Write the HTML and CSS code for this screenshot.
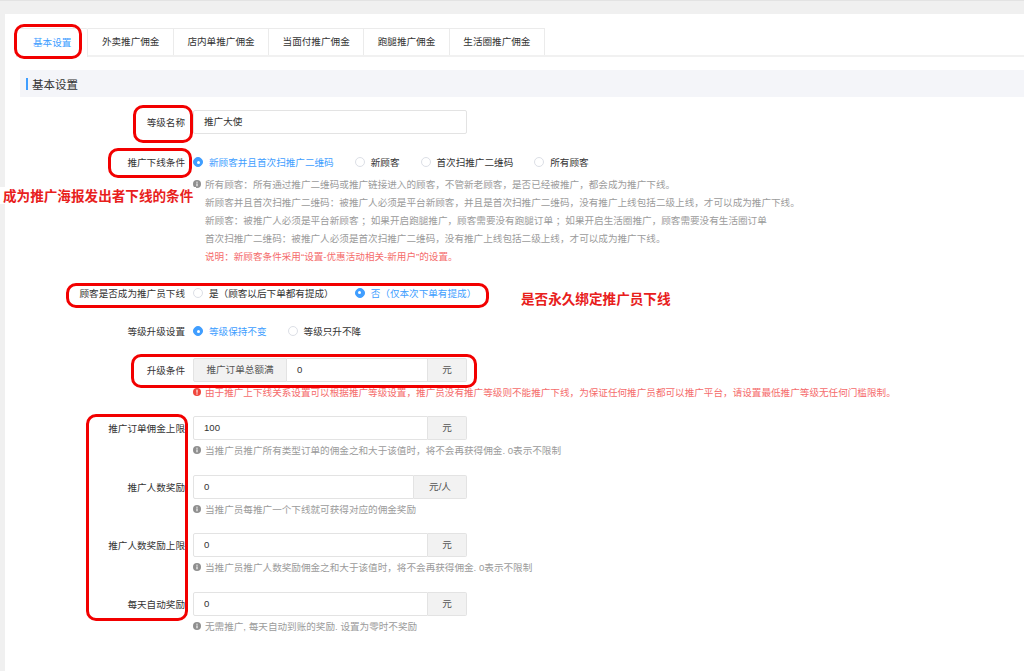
FILE: index.html
```html
<!DOCTYPE html>
<html lang="zh-CN">
<head>
<meta charset="utf-8">
<title>推广等级设置</title>
<link rel="stylesheet" href="styles.css">
</head>
<body>
<div class="page">
  <div class="panel">
    <div class="tabs">
      <div class="tab active">基本设置</div>
      <div class="tab">外卖推广佣金</div>
      <div class="tab">店内单推广佣金</div>
      <div class="tab">当面付推广佣金</div>
      <div class="tab">跑腿推广佣金</div>
      <div class="tab">生活圈推广佣金</div>
    </div>
    <div class="sec-title"><span class="bar"></span>基本设置</div>

    <div class="form">
      <div class="group first">
        <div class="row">
          <label class="lbl">等级名称</label>
          <div class="input">推广大使</div>
        </div>
      </div>

      <div class="group">
        <div class="row">
          <label class="lbl">推广下线条件</label>
          <div class="radios">
            <span class="radio on"><i class="dot"></i>新顾客并且首次扫推广二维码</span>
            <span class="radio"><i class="dot"></i>新顾客</span>
            <span class="radio"><i class="dot"></i>首次扫推广二维码</span>
            <span class="radio"><i class="dot"></i>所有顾客</span>
          </div>
        </div>
        <div class="help">
          <span class="ico"><svg viewBox="0 0 8 8" width="8" height="8"><circle cx="4" cy="4" r="4" fill="#8f8f8f"/><rect x="3.45" y="3.4" width="1.1" height="2.9" fill="#fff"/><circle cx="4" cy="2.2" r="0.65" fill="#fff"/></svg></span>
          <div class="lines">
            <p>所有顾客：所有通过推广二维码或推广链接进入的顾客，不管新老顾客，是否已经被推广，都会成为推广下线。</p>
            <p>新顾客并且首次扫推广二维码：被推广人必须是平台新顾客，并且是首次扫推广二维码，没有推广上线包括二级上线，才可以成为推广下线。</p>
            <p>新顾客：被推广人必须是平台新顾客 ；如果开启跑腿推广，顾客需要没有跑腿订单 ；如果开启生活圈推广，顾客需要没有生活圈订单</p>
            <p>首次扫推广二维码：被推广人必须是首次扫推广二维码，没有推广上线包括二级上线，才可以成为推广下线。</p>
            <p class="warn">说明：新顾客条件采用“设置-优惠活动相关-新用户”的设置。</p>
          </div>
        </div>
      </div>

      <div class="group">
        <div class="row">
          <label class="lbl">顾客是否成为推广员下线</label>
          <div class="radios">
            <span class="radio"><i class="dot"></i>是（顾客以后下单都有提成）</span>
            <span class="radio on"><i class="dot"></i>否（仅本次下单有提成）</span>
          </div>
        </div>
      </div>

      <div class="group">
        <div class="row">
          <label class="lbl">等级升级设置</label>
          <div class="radios">
            <span class="radio on"><i class="dot"></i>等级保持不变</span>
            <span class="radio"><i class="dot"></i>等级只升不降</span>
          </div>
        </div>
      </div>

      <div class="group">
        <div class="row">
          <label class="lbl">升级条件</label>
          <div class="igroup">
            <span class="addon pre">推广订单总额满</span>
            <span class="field mid">0</span>
            <span class="addon suf">元</span>
          </div>
        </div>
        <div class="help warn">
          <span class="ico"><svg viewBox="0 0 8 8" width="8" height="8"><circle cx="4" cy="4" r="4" fill="#f0463c"/><rect x="3.45" y="1.6" width="1.1" height="3.2" fill="#fff"/><circle cx="4" cy="6" r="0.65" fill="#fff"/></svg></span>
          <div class="lines">
            <p>由于推广上下线关系设置可以根据推广等级设置，推广员没有推广等级则不能推广下线，为保证任何推广员都可以推广平台，请设置最低推广等级无任何门槛限制。</p>
          </div>
        </div>
      </div>

      <div class="group">
        <div class="row">
          <label class="lbl">推广订单佣金上限</label>
          <div class="igroup">
            <span class="field">100</span>
            <span class="addon suf">元</span>
          </div>
        </div>
        <div class="help">
          <span class="ico"><svg viewBox="0 0 8 8" width="8" height="8"><circle cx="4" cy="4" r="4" fill="#8f8f8f"/><rect x="3.45" y="3.4" width="1.1" height="2.9" fill="#fff"/><circle cx="4" cy="2.2" r="0.65" fill="#fff"/></svg></span>
          <div class="lines"><p>当推广员推广所有类型订单的佣金之和大于该值时，将不会再获得佣金. 0表示不限制</p></div>
        </div>
      </div>

      <div class="group">
        <div class="row">
          <label class="lbl">推广人数奖励</label>
          <div class="igroup">
            <span class="field">0</span>
            <span class="addon suf wide">元/人</span>
          </div>
        </div>
        <div class="help">
          <span class="ico"><svg viewBox="0 0 8 8" width="8" height="8"><circle cx="4" cy="4" r="4" fill="#8f8f8f"/><rect x="3.45" y="3.4" width="1.1" height="2.9" fill="#fff"/><circle cx="4" cy="2.2" r="0.65" fill="#fff"/></svg></span>
          <div class="lines"><p>当推广员每推广一个下线就可获得对应的佣金奖励</p></div>
        </div>
      </div>

      <div class="group">
        <div class="row">
          <label class="lbl">推广人数奖励上限</label>
          <div class="igroup">
            <span class="field">0</span>
            <span class="addon suf">元</span>
          </div>
        </div>
        <div class="help">
          <span class="ico"><svg viewBox="0 0 8 8" width="8" height="8"><circle cx="4" cy="4" r="4" fill="#8f8f8f"/><rect x="3.45" y="3.4" width="1.1" height="2.9" fill="#fff"/><circle cx="4" cy="2.2" r="0.65" fill="#fff"/></svg></span>
          <div class="lines"><p>当推广员推广人数奖励佣金之和大于该值时，将不会再获得佣金. 0表示不限制</p></div>
        </div>
      </div>

      <div class="group">
        <div class="row">
          <label class="lbl">每天自动奖励</label>
          <div class="igroup">
            <span class="field">0</span>
            <span class="addon suf">元</span>
          </div>
        </div>
        <div class="help">
          <span class="ico"><svg viewBox="0 0 8 8" width="8" height="8"><circle cx="4" cy="4" r="4" fill="#8f8f8f"/><rect x="3.45" y="3.4" width="1.1" height="2.9" fill="#fff"/><circle cx="4" cy="2.2" r="0.65" fill="#fff"/></svg></span>
          <div class="lines"><p>无需推广, 每天自动到账的奖励. 设置为零时不奖励</p></div>
        </div>
      </div>
    </div>
  </div>

  <div class="mark m-tab"></div>
  <div class="mark m-name"></div>
  <div class="mark m-cond"></div>
  <div class="mark m-bind"></div>
  <div class="mark m-up"></div>
  <div class="mark m-left"></div>
  <div class="note note1">成为推广海报发出者下线的条件</div>
  <div class="note note2">是否永久绑定推广员下线</div>
</div>
</body>
</html>
```

FILE: styles.css
```css
* {
  box-sizing: border-box;
  margin: 0;
  padding: 0;
}

body {
  background: #f0f0f0;
  font-family: "Liberation Sans", "Noto Sans CJK SC", sans-serif;
  font-size: 9.6px;
  color: #333;
}

.page {
  position: relative;
  width: 1024px;
  height: 671px;
  overflow: hidden;
  border-top: 1px solid #e3e3e3;
  padding: 13px 0 0 5px;
}

.panel {
  background: #fff;
  height: 657px;
  padding-top: 14px;
}

/* tabs */
.tabs {
  display: flex;
  align-items: flex-end;
  margin-left: 11px;
  height: 29px;
  border-bottom: 2px solid #f1f1f1;
}

.tab {
  height: 27px;
  line-height: 26px;
  padding: 0 13.5px;
  border: 1px solid #ebebeb;
  border-bottom: none;
  border-left: none;
  color: #333;
  background: #fff;
  white-space: nowrap;
}

.tab.active {
  color: #409eff;
  padding: 0 16px;
  border-left: 1px solid #ebebeb;
  height: 29px;
  line-height: 27px;
  margin-bottom: -2px;
  border-radius: 2px 2px 0 0;
}

/* section title */
.sec-title {
  margin: 13px 0 0 15px;
  height: 27px;
  background: #f4f5f9;
  display: flex;
  align-items: center;
  font-size: 11.5px;
  color: #333;
}

.sec-title .bar {
  width: 2px;
  height: 12px;
  background: #409eff;
  margin: 0 4px 0 6px;
}

/* form */
.form {
  margin-top: 13px;
}

.group {
  margin-bottom: 14.5px;
}

.group.first {
  margin-bottom: 16px;
}

.row {
  display: flex;
  align-items: center;
  height: 24px;
}

.lbl {
  width: 180px;
  flex-shrink: 0;
  text-align: right;
  margin-right: 8px;
  color: #333;
  white-space: nowrap;
}

.input {
  width: 274px;
  height: 24px;
  border: 1px solid #e3e3e3;
  border-radius: 2px;
  padding: 0 10px;
  line-height: 22px;
  color: #333;
}

.igroup {
  display: flex;
  width: 274px;
  height: 24px;
}

.field {
  flex: 1;
  border: 1px solid #e3e3e3;
  border-radius: 2px 0 0 2px;
  padding: 0 10px;
  line-height: 22px;
  color: #333;
}

.field.mid {
  border-radius: 0;
  border-left: none;
}

.addon {
  background: #f2f2f2;
  border: 1px solid #e3e3e3;
  line-height: 22px;
  text-align: center;
  color: #555;
  white-space: nowrap;
}

.addon.pre {
  width: 94px;
  border-radius: 2px 0 0 2px;
}

.addon.suf {
  width: 39px;
  border-left: none;
  border-radius: 0 2px 2px 0;
}

.addon.suf.wide {
  width: 53px;
}

/* radios */
.radios {
  display: flex;
  align-items: center;
}

.radio {
  display: flex;
  align-items: center;
  margin-right: 21px;
  color: #333;
  white-space: nowrap;
}

.radio .dot {
  width: 10px;
  height: 10px;
  border: 1px solid #dcdfe6;
  border-radius: 50%;
  margin-right: 6px;
  background: #fff;
  position: relative;
}

.radio.on {
  color: #409eff;
}

.radio.on .dot {
  background: #409eff;
  border-color: #409eff;
}

.radio.on .dot::after {
  content: "";
  position: absolute;
  left: 2.5px;
  top: 2.5px;
  width: 3px;
  height: 3px;
  border-radius: 50%;
  background: #fff;
}

/* help */
.help {
  display: flex;
  margin: 2px 0 0 188px;
  color: #9b9b9b;
  line-height: 18px;
  white-space: nowrap;
}

.help .ico {
  width: 12px;
  flex-shrink: 0;
  padding-top: 4px;
}

.help .ico svg {
  display: block;
}

.help .warn,
.help.warn {
  color: #f56c6c;
}

/* overlays: annotation marks drawn over the form */
.mark {
  position: absolute;
  border: 3px solid #f20000;
  border-radius: 10px;
}

.m-tab {
  left: 14px;
  top: 23px;
  width: 68px;
  height: 35px;
}

.m-name {
  left: 133px;
  top: 104px;
  width: 60px;
  height: 38px;
}

.m-cond {
  left: 108px;
  top: 147px;
  width: 84px;
  height: 30px;
}

.m-bind {
  left: 66px;
  top: 282px;
  width: 423px;
  height: 25px;
}

.m-up {
  left: 131px;
  top: 353px;
  width: 346px;
  height: 34px;
}

.m-left {
  left: 86px;
  top: 413px;
  width: 102px;
  height: 207px;
}

.note {
  position: absolute;
  color: #e8201c;
  font-weight: bold;
  font-size: 13.6px;
  line-height: 17px;
  white-space: nowrap;
  font-family: "Noto Sans CJK SC", sans-serif;
}

.note1 {
  left: 0;
  top: 186px;
  padding: 0 3px;
  background: #fff;
}

.note2 {
  left: 521px;
  top: 289px;
}
```
